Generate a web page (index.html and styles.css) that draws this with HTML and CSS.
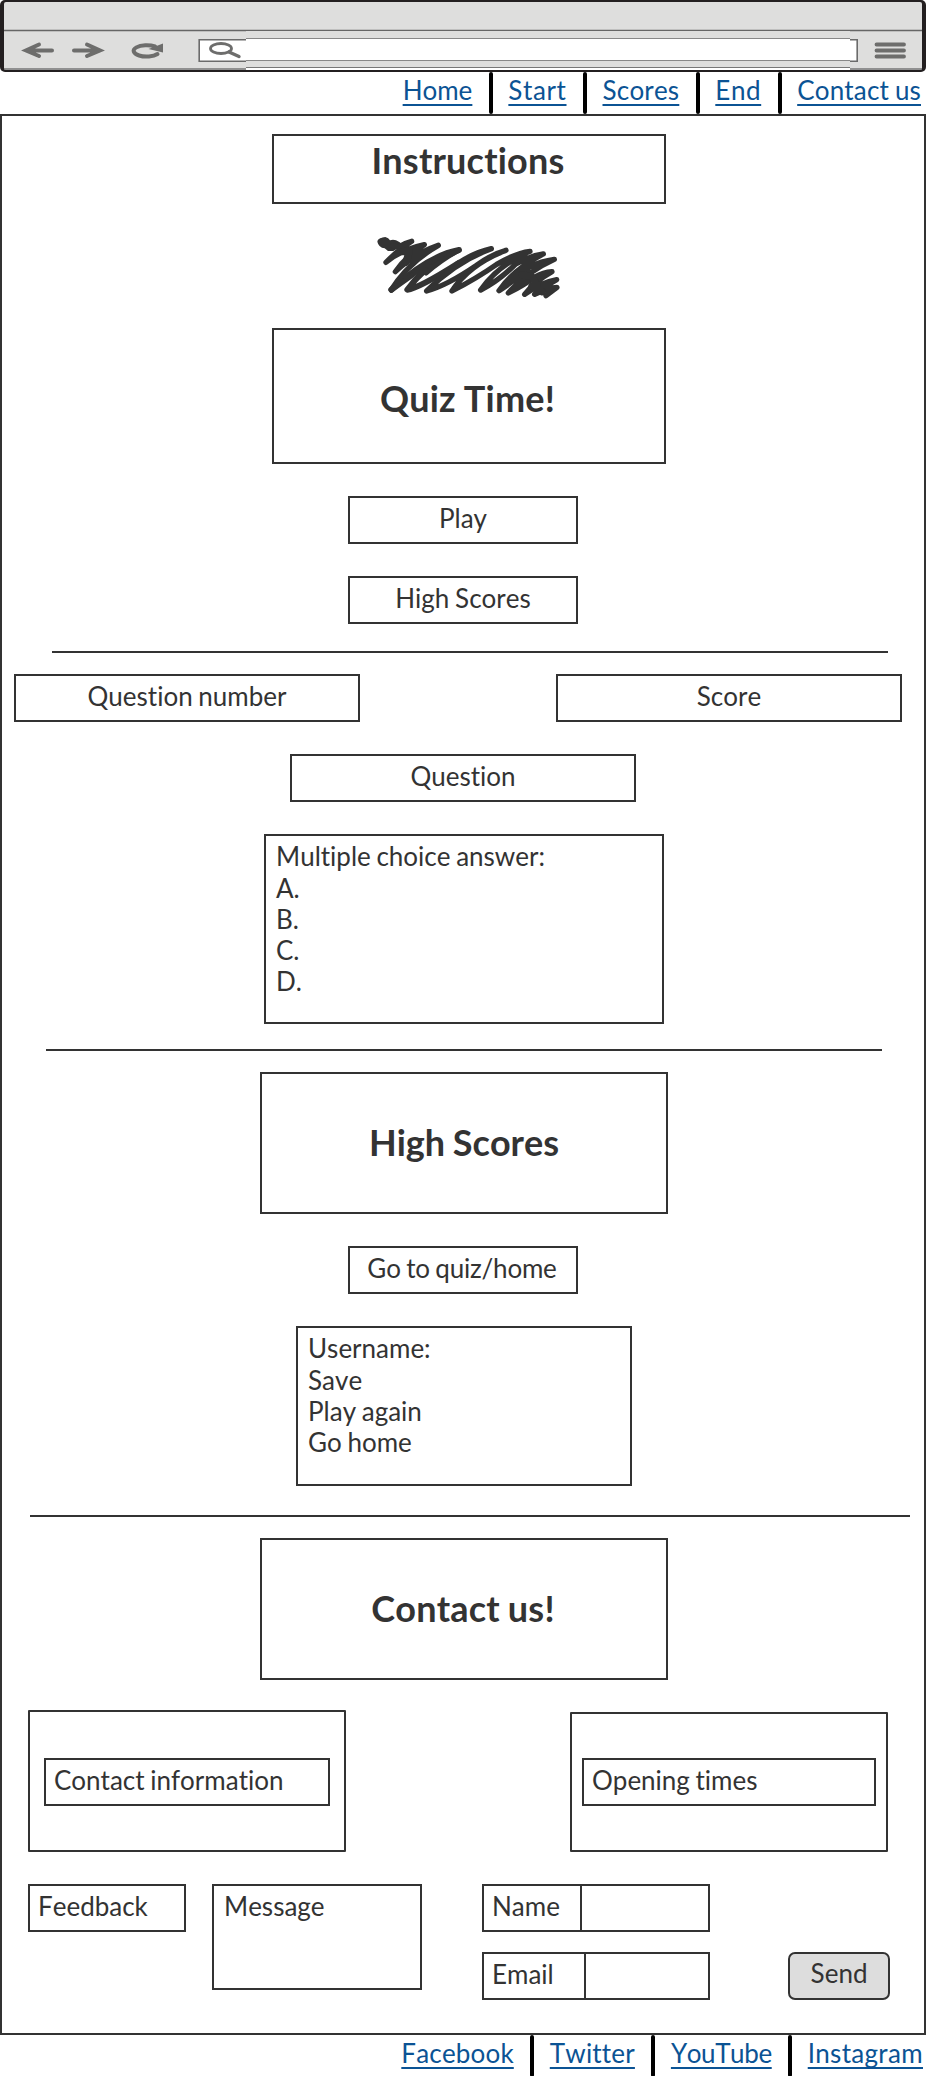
FILE: index.html
```html
<!DOCTYPE html>
<html lang="en">
<head>
<meta charset="utf-8">
<title>Quiz Time</title>
<link rel="stylesheet" href="styles.css">
</head>
<body>
<header class="browser">
  <svg class="chrome" viewBox="0 0 926 72" width="926" height="72" aria-hidden="true">
    <rect x="0" y="0" width="926" height="72" rx="5" fill="#231f20"/>
    <rect x="4" y="2" width="918" height="68" rx="2" fill="#dededd"/>
    <path d="M4 30.5H246M850 30.5H922" stroke="#666" stroke-width="1.4"/>
    <path d="M246 30.3H850" stroke="#666" stroke-width="1.2"/>
    <path d="M4 69H246M850 69H922" stroke="#777" stroke-width="1.6"/>
    <path d="M246 67.5H850" stroke="#777" stroke-width="1"/>
    <path d="M246 69H850" stroke="#fff" stroke-width="2"/>
    <path d="M246 39.7H199.2V61.3H246M850 39.7H857.2V61.3H850" fill="#fff" stroke="#6b6b6b" stroke-width="1.6"/>
    <path d="M246 38.5H850V60.5H246" fill="#fff"/>
    <path d="M246 38.5H850M246 60.5H850" stroke="#888" stroke-width="1.2"/>
    <g fill="none" stroke="#6d6d6c" stroke-width="4" stroke-linecap="round">
      <path d="M52 50.5H27M39 44.5L26 50.5L39 56"/>
      <path d="M74 50.5H99M87 44.5L100 50.5L87 56"/>
      <path d="M157.500 54A13 5.700 0 1 1 155 46.500"/>
      <ellipse cx="221" cy="48.500" rx="10.500" ry="5" stroke-width="2.8"/>
      <path d="M229 52L239 56.500" stroke-width="3.4"/>
      <path d="M876.500 44.500H904M876.500 50.500H904M876.500 56.500H904" stroke-width="3.8"/>
    </g>
    <path d="M163 43.500V52.500L148.500 49Z" fill="#6d6d6c"/>
  </svg>
</header>
<nav class="links">
  <a href="#">Home</a><i class="sep"></i>
  <a href="#" class="loose">Start</a><i class="sep"></i>
  <a href="#" class="open">Scores</a><i class="sep"></i>
  <a href="#" class="loose">End</a><i class="sep"></i>
  <a href="#" class="open">Contact us</a>
</nav>
<main class="page">
  <section class="home">
    <h1 class="box title title-short">Instructions</h1>
    <svg class="scribble" viewBox="0 0 630 255" width="210" height="85" aria-hidden="true">
      <path fill="#333" d="M52 50C54 40 64 38 76 36Q86 38 90 46Q102 40 118 51L130 60L100 78L84 78L74 70Q56 68 52 50Z"/>
      <g fill="none" stroke="#333" stroke-linecap="round" stroke-linejoin="round">
        <path stroke-width="16" d="M98 62L116 66Q134 54 155 49Q118 72 78 112Q122 74 193 59Q140 92 106 140Q160 88 235 61Q146 112 94 194"/>
        <path stroke-width="18" d="M94 194Q206 92 297 75Q196 118 142 194Q176 190 296 114"/>
        <path stroke-width="15" d="M296 76Q250 100 198 144M94 196Q150 156 210 110"/>
        <path stroke-width="16" d="M292 116Q344 82 394 71Q288 110 200 198Q260 182 348 122Q394 88 438 76Q328 118 276 198Q350 160 410 118Q468 84 510 79Q414 120 362 195Q416 168 466 118Q506 94 550 87Q462 132 417 197Q468 164 508 126Q544 108 583 103Q500 140 445 204Q492 180 524 156Q550 142 576 140Q526 168 494 208Q544 172 590 164Q548 188 524 208Q566 188 591 187L558 212"/>
        <path stroke-width="22" d="M486 150L514 154L530 178M516 184L546 200M128 80L148 78L138 112"/>
      </g>
    </svg>
    <h1 class="box title title-quiz">Quiz Time!</h1>
    <a class="box button">Play</a>
    <a class="box button">High Scores</a>
  </section>
  <hr class="rule rule-one">
  <section class="quiz">
    <div class="status">
      <div class="box field">Question number</div>
      <div class="box field">Score</div>
    </div>
    <div class="box field">Question</div>
    <div class="box list answers"><p class="lead">Multiple choice answer:</p>A.<br>B.<br>C.<br>D.</div>
  </section>
  <hr class="rule rule-two">
  <section class="scores">
    <h1 class="box title title-wide">High Scores</h1>
    <a class="box button button-quiz">Go to quiz/home</a>
    <div class="box list user"><p class="lead">Username:</p>Save<br>Play again<br>Go home</div>
  </section>
  <hr class="rule rule-three">
  <section class="contact">
    <h1 class="box title title-wide title-contact">Contact us!</h1>
    <div class="panels">
      <div class="box panel"><div class="box label">Contact information</div></div>
      <div class="box panel panel-times"><div class="box label">Opening times</div></div>
    </div>
    <form class="form">
      <div class="box label feedback">Feedback</div>
      <div class="box label message">Message</div>
      <div class="inputs">
        <div class="box input"><span class="key">Name</span></div>
        <div class="box input"><span class="key key-email">Email</span></div>
      </div>
      <div class="box send">Send</div>
    </form>
  </section>
</main>
<footer class="links links-footer">
  <a href="#" class="open">Facebook</a><i class="sep"></i>
  <a href="#" class="open">Twitter</a><i class="sep"></i>
  <a href="#" class="tight">YouTube</a><i class="sep"></i>
  <a href="#" class="wide">Instagram</a>
</footer>
</body>
</html>
```
FILE: styles.css
```css
* { box-sizing: border-box; }
body {
  margin: 0;
  width: 926px;
  height: 2076px;
  overflow: hidden;
  background: #fff;
  color: #333;
  font: 26px/31px Lato, sans-serif;
  font-variant-ligatures: none;
  font-kerning: none;
  word-spacing: -1px;
}
.browser { height: 72px; }
.chrome { display: block; }
.links {
  display: flex;
  justify-content: flex-end;
  height: 42px;
  padding: 3px 5px 0 0;
}
.links a {
  color: #0b5394;
  text-decoration: underline;
  text-decoration-thickness: 2px;
  text-underline-offset: 4px;
  text-decoration-skip-ink: none;
}
.links .loose { letter-spacing: 0.6px; }
.links .open { letter-spacing: 0.18px; }
.links .wide { letter-spacing: 0.3px; }
.links .tight { letter-spacing: -0.4px; }
.sep {
  width: 4px;
  height: 42px;
  margin: -3px 15.5px 0 16.5px;
  border-radius: 2px;
  background: #000;
}
.links-footer { padding-right: 3px; }
.page {
  height: 1921px;
  border: 2px solid #333;
}
.box { border: 2px solid #333; }
.home, .quiz, .scores, .contact {
  display: flex;
  flex-direction: column;
}
.home { padding: 18px 0 0 270px; }
.title {
  width: 394px;
  height: 136px;
  margin: 0;
  padding-top: 47px;
  font-size: 36px;
  line-height: 43px;
  font-weight: 700;
  text-align: center;
}
.title-short { height: 70px; padding: 3px 2px 0 0; letter-spacing: 0.2px; }
.title-quiz { padding-right: 3px; letter-spacing: 0.2px; }
.scribble { margin: 21px 0 18px 88px; }
.title-wide { width: 408px; height: 142px; margin-left: 258px; }
.title-contact { padding-right: 2px; letter-spacing: 0.2px; }
.button {
  width: 230px;
  height: 48px;
  margin: 32px 0 0 346px;
  padding-top: 5px;
  text-align: center;
}
.home .button { margin-left: 76px; }
.button-quiz { padding-right: 2px; letter-spacing: -0.2px; }
.rule {
  height: 2px;
  margin: 0;
  border: 0;
  background: #333;
}
.rule-one { width: 836px; margin: 27px 0 21px 50px; }
.rule-two { width: 836px; margin: 25px 0 21px 44px; }
.rule-three { width: 880px; margin: 29px 0 21px 28px; }
.status {
  display: flex;
  justify-content: space-between;
  padding: 0 22px 0 12px;
  margin-bottom: 32px;
}
.field {
  width: 346px;
  height: 48px;
  padding-top: 5px;
  text-align: center;
}
.quiz > .field { margin-left: 288px; }
.list { padding: 5px 10px; }
.lead { margin: 0 0 1px; }
.answers { width: 400px; height: 190px; margin: 32px 0 0 262px; }
.user { width: 336px; height: 160px; margin: 32px 0 0 294px; }
.panels {
  display: flex;
  align-items: flex-end;
  justify-content: space-between;
  margin: 30px 36px 32px 26px;
}
.panel {
  width: 318px;
  height: 142px;
  padding: 46px 14px 0;
  border-radius: 1px;
}
.panel-times { height: 140px; padding: 44px 10px 0; }
.label { height: 48px; padding: 5px 8px; }
.form {
  display: flex;
  align-items: flex-start;
  margin: 0 34px 0 26px;
}
.feedback { width: 158px; margin-right: 26px; }
.message { width: 210px; height: 106px; margin-right: 60px; padding-left: 10px; }
.inputs {
  display: flex;
  flex-direction: column;
  gap: 20px;
  width: 228px;
}
.input { display: flex; height: 48px; }
.key {
  width: 98px;
  padding: 5px 8px;
  border-right: 2px solid #333;
}
.key-email { width: 102px; }
.send {
  width: 102px;
  height: 48px;
  margin: 68px 0 0 auto;
  padding-top: 4px;
  border-radius: 7px;
  background: #ddd;
  text-align: center;
}
```
